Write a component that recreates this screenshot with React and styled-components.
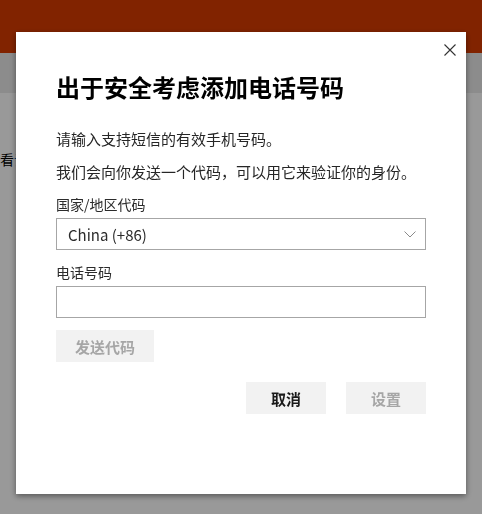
import React, { useState } from "react";
import styled, { createGlobalStyle } from "styled-components";

const GlobalStyle = createGlobalStyle`
  html, body {
    margin: 0;
    padding: 0;
  }
  body {
    font-family: "Noto Sans CJK SC", "Noto Sans", sans-serif;
    background: #fff;
    overflow: hidden;
  }
`;

const Page = styled.div`
  min-height: 100vh;
  display: flex;
  flex-direction: column;
`;

const Header = styled.header`
  height: 53px;
  background: #d83b01;
`;

const NavBand = styled.nav`
  height: 40px;
  background: #eaeaea;
`;

const Content = styled.main`
  padding-top: 56px;
`;

const BackText = styled.p`
  margin: 0;
  font-size: 14px;
  line-height: 20px;
  color: #000;
  a {
    color: #0067b8;
    text-decoration: none;
  }
`;

const Overlay = styled.div`
  position: fixed;
  inset: 0;
  background: rgba(0, 0, 0, 0.4);
  padding: 32px 16px;
  box-sizing: border-box;
`;

const Dialog = styled.div`
  position: relative;
  width: 450px;
  height: 462px;
  box-sizing: border-box;
  background: #fff;
  padding: 39px 40px 0;
  box-shadow: 0 2px 6px rgba(0, 0, 0, 0.45);
  color: #262626;
`;

const CloseButton = styled.button`
  position: absolute;
  top: 2px;
  right: 0;
  width: 32px;
  height: 32px;
  border: 0;
  padding: 0;
  background: transparent;
  display: flex;
  align-items: center;
  justify-content: center;
  cursor: pointer;
`;

const Title = styled.h1`
  margin: 0;
  font-size: 24px;
  line-height: 32px;
  font-weight: 700;
  color: #000;
`;

const Para = styled.p`
  margin: ${p => p.$top}px 0 0;
  font-size: 15px;
  line-height: 20px;
`;

const Label = styled.label`
  display: block;
  margin: 12px 0 4px;
  font-size: 14px;
  line-height: 20px;
  color: #2b2b2b;
`;

const SelectWrap = styled.div`
  position: relative;
`;

const Select = styled.select`
  appearance: none;
  display: block;
  width: 100%;
  height: 32px;
  box-sizing: border-box;
  border: 1px solid #a6a6a6;
  border-radius: 0;
  background: #fff;
  padding: 0 30px 0 11px;
  font-family: inherit;
  font-size: 15px;
  color: #2b2b2b;
  outline: none;
`;

const Chevron = styled.svg`
  position: absolute;
  right: 10px;
  top: 13px;
  pointer-events: none;
`;

const Input = styled.input`
  display: block;
  width: 100%;
  height: 32px;
  box-sizing: border-box;
  border: 1px solid #a6a6a6;
  border-radius: 0;
  padding: 0 11px;
  font-family: inherit;
  font-size: 15px;
  outline: none;
`;

const Button = styled.button`
  height: 32px;
  min-width: ${p => p.$width || 80}px;
  border: 0;
  padding: 0 12px;
  background: #f2f2f2;
  font-family: inherit;
  font-size: 15px;
  font-weight: 700;
  color: ${p => (p.disabled ? "#a6a6a6" : "#1a1a1a")};
  cursor: ${p => (p.disabled ? "default" : "pointer")};
`;

const SendRow = styled.div`
  margin-top: 12px;
  display: flex;
`;

const Footer = styled.div`
  margin-top: 20px;
  display: flex;
  justify-content: flex-end;
  gap: 20px;
`;

const App = () => {
  const [country, setCountry] = useState("CN");
  const [phone, setPhone] = useState("");

  return (
    <>
      <GlobalStyle />
      <Page>
        <Header />
        <NavBand />
        <Content>
          <BackText>
            看<a href="#">设置</a>
          </BackText>
        </Content>
      </Page>
      <Overlay>
        <Dialog role="dialog">
          <CloseButton aria-label="关闭">
            <svg width="12" height="12" viewBox="0 0 12 12">
              <path d="M0.5 0.5 L11.5 11.5 M11.5 0.5 L0.5 11.5" stroke="#333" strokeWidth="1.1" fill="none" />
            </svg>
          </CloseButton>
          <Title>出于安全考虑添加电话号码</Title>
          <Para $top={26}>请输入支持短信的有效手机号码。</Para>
          <Para $top={13}>我们会向你发送一个代码，可以用它来验证你的身份。</Para>
          <Label htmlFor="country">国家/地区代码</Label>
          <SelectWrap>
            <Select id="country" value={country} onChange={e => setCountry(e.target.value)}>
              <option value="CN">China (+86)</option>
              <option value="US">United States (+1)</option>
            </Select>
            <Chevron width="12" height="7" viewBox="0 0 12 7">
              <path d="M0.5 0.5 L6 6 L11.5 0.5" stroke="#8a8a8a" strokeWidth="1" fill="none" />
            </Chevron>
          </SelectWrap>
          <Label htmlFor="phone">电话号码</Label>
          <Input id="phone" type="tel" value={phone} onChange={e => setPhone(e.target.value)} />
          <SendRow>
            <Button $width={98} disabled={!phone}>发送代码</Button>
          </SendRow>
          <Footer>
            <Button>取消</Button>
            <Button disabled>设置</Button>
          </Footer>
        </Dialog>
      </Overlay>
    </>
  );
};

export default App;
